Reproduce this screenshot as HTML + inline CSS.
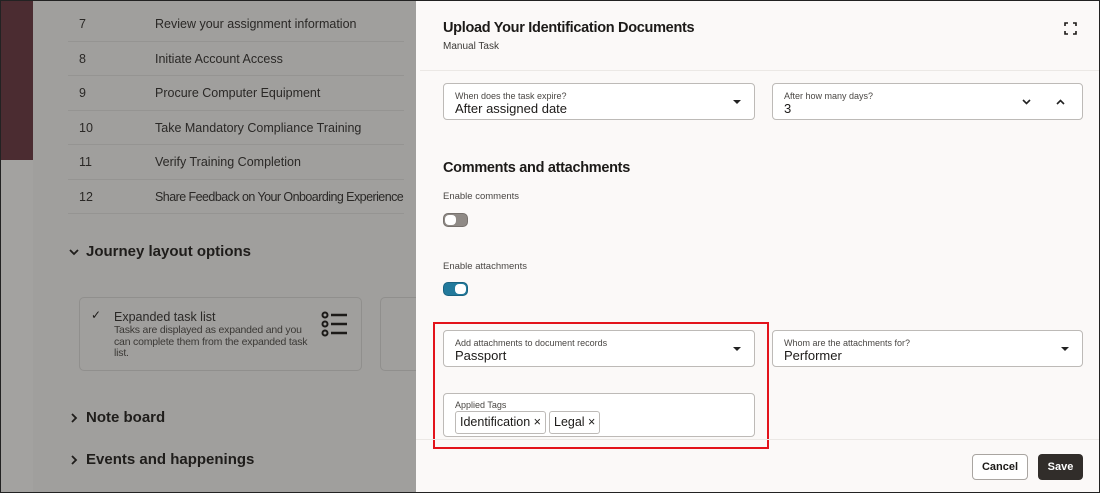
<!DOCTYPE html>
<html><head><style>
*{box-sizing:border-box;margin:0;padding:0}
body{width:1100px;height:493px;overflow:hidden;font-family:"Liberation Sans",sans-serif;background:#a09f9d;position:relative;color:#1c1a18}
.frame{position:absolute;inset:0;border:1px solid #222;z-index:10;pointer-events:none}
.maroon{position:absolute;left:0;top:0;width:33px;height:160px;background:#4b2c31}
.tex{position:absolute;left:0;top:160px;width:33px;height:333px;background:#a3a2a0}
.main{position:absolute;left:33px;top:0;width:383px;height:493px;background:#a09f9d}
.row{position:absolute;left:68px;width:336px;height:34.5px;border-bottom:1px solid #959492;font-size:12.5px;color:#2a2826;white-space:nowrap}
.row span{position:absolute;top:10px}
.sec{position:absolute;left:68px;font-size:15px;font-weight:bold;color:#1f1d1b}
.sec svg{position:absolute;left:0;top:4px}
.sec b{position:absolute;left:18px;white-space:nowrap}
.card{position:absolute;top:297px;height:74px;border:1px solid #908f8d;border-radius:5px}
.panel{position:absolute;left:416px;top:0;width:684px;height:493px;background:#fbf9f8}
.fld{position:absolute;background:#fff;border:1px solid #bdbab7;border-radius:4px;height:37px}
.fld .l{position:absolute;left:11px;top:7px;font-size:9px;color:#4a4744}
.fld .v{position:absolute;left:11px;top:17px;font-size:13px;color:#1c1a18}
.caret{position:absolute;top:16px;width:0;height:0;border-left:4px solid transparent;border-right:4px solid transparent;border-top:4px solid #222}
.lbl{position:absolute;left:27px;font-size:9.5px;color:#4a4744}
.tag{position:absolute;top:17px;height:23px;border:1px solid #bdbab7;border-radius:3px;font-size:12.5px;padding:3px 4px}
</style></head><body>
<div class="maroon"></div><div class="tex"></div>
<div class="main"></div>
<div class="row" style="top:7px"><span style="left:11px">7</span><span style="left:87px">Review your assignment information</span></div>
<div class="row" style="top:41.5px"><span style="left:11px">8</span><span style="left:87px">Initiate Account Access</span></div>
<div class="row" style="top:76px"><span style="left:11px">9</span><span style="left:87px">Procure Computer Equipment</span></div>
<div class="row" style="top:110.5px"><span style="left:11px">10</span><span style="left:87px">Take Mandatory Compliance Training</span></div>
<div class="row" style="top:145px"><span style="left:11px">11</span><span style="left:87px">Verify Training Completion</span></div>
<div class="row" style="top:179.5px"><span style="left:11px">12</span><span style="left:87px;letter-spacing:-0.55px">Share Feedback on Your Onboarding Experience</span></div>
<div class="sec" style="top:243px"><svg width="12" height="10" viewBox="0 0 12 10"><path d="M2 3L6 7L10 3" fill="none" stroke="#1f1d1b" stroke-width="1.8"/></svg><b>Journey layout options</b></div>
<div class="card" style="left:79px;width:283px">
 <div style="position:absolute;left:11px;top:10px;font-size:12px">✓</div>
 <div style="position:absolute;left:34px;top:12px;font-size:12.5px;color:#2a2826">Expanded task list</div>
 <div style="position:absolute;left:34px;top:27px;width:205px;font-size:10.5px;line-height:11.5px;color:#3b3936;letter-spacing:-0.2px">Tasks are displayed as expanded and you can complete them from the expanded task list.</div>
 <svg style="position:absolute;left:240px;top:13px" width="30" height="28" viewBox="0 0 30 28"><g fill="none" stroke="#1c1a18" stroke-width="2"><circle cx="5" cy="4" r="2.5"/><circle cx="5" cy="13" r="2.5"/><circle cx="5" cy="22" r="2.5"/><path d="M11 4H27M11 13H27M11 22H27" stroke-width="2.5"/></g></svg>
</div>
<div class="card" style="left:380px;width:60px"></div>
<div class="sec" style="top:409px"><svg width="12" height="10" viewBox="0 0 12 10"><path d="M4 1L8 5L4 9" fill="none" stroke="#1f1d1b" stroke-width="1.8"/></svg><b>Note board</b></div>
<div class="sec" style="top:451px"><svg width="12" height="10" viewBox="0 0 12 10"><path d="M4 1L8 5L4 9" fill="none" stroke="#1f1d1b" stroke-width="1.8"/></svg><b>Events and happenings</b></div>

<div class="panel">
 <div style="position:absolute;left:27px;top:20px;font-size:14.5px;font-weight:bold;letter-spacing:-0.3px">Upload Your Identification Documents</div>
 <div style="position:absolute;left:27px;top:41px;font-size:10px;color:#3b3936">Manual Task</div>
 <svg style="position:absolute;left:648px;top:22px" width="13" height="13" viewBox="0 0 13 13"><path d="M1 4V1H4M9 1H12V4M12 9V12H9M4 12H1V9" fill="none" stroke="#1c1a18" stroke-width="1.6"/></svg>
 <div style="position:absolute;left:4px;top:70px;width:680px;border-top:1px solid #ebe8e5"></div>
 <div class="fld" style="left:27px;top:83px;width:312px"><div class="l">When does the task expire?</div><div class="v">After assigned date</div><div class="caret" style="left:289px"></div></div>
 <div class="fld" style="left:356px;top:83px;width:311px"><div class="l">After how many days?</div><div class="v">3</div>
  <svg style="position:absolute;left:248px;top:13px" width="60" height="10" viewBox="0 0 60 10"><path d="M2 3L5.5 6.5L9 3M36 7L39.5 3.5L43 7" fill="none" stroke="#222" stroke-width="1.6"/></svg></div>
 <div style="position:absolute;left:27px;top:160px;font-size:14.5px;font-weight:bold;letter-spacing:-0.3px">Comments and attachments</div>
 <div class="lbl" style="top:191px">Enable comments</div>
 <div style="position:absolute;left:27px;top:213px;width:25px;height:14px;border-radius:5px;background:#8f8a86;border:1px solid #77726e"><div style="position:absolute;left:1px;top:1px;width:11px;height:10px;border-radius:4px;background:#fff"></div></div>
 <div class="lbl" style="top:261px">Enable attachments</div>
 <div style="position:absolute;left:27px;top:282px;width:25px;height:14px;border-radius:5px;background:#227a9c;border:1px solid #1a6381"><div style="position:absolute;right:1px;top:1px;width:11px;height:10px;border-radius:4px;background:#fff"></div></div>
 <div style="position:absolute;left:17px;top:322px;width:336px;height:127px;border:2px solid #e3131b"></div>
 <div class="fld" style="left:27px;top:330px;width:312px"><div class="l">Add attachments to document records</div><div class="v">Passport</div><div class="caret" style="left:289px"></div></div>
 <div class="fld" style="left:356px;top:330px;width:311px"><div class="l">Whom are the attachments for?</div><div class="v">Performer</div><div class="caret" style="left:288px"></div></div>
 <div class="fld" style="left:27px;top:393px;width:312px;height:44px"><div class="l" style="top:6px">Applied Tags</div>
  <div class="tag" style="left:11px">Identification ×</div><div class="tag" style="left:105px">Legal ×</div></div>
 <div style="position:absolute;left:0;top:439px;width:684px;border-top:1px solid #ebe8e5"></div>
 <div style="position:absolute;left:556px;top:454px;width:56px;height:26px;border:1px solid #a9a5a1;border-radius:4px;background:#fff;font-size:11px;font-weight:bold;text-align:center;line-height:24px">Cancel</div>
 <div style="position:absolute;left:622px;top:454px;width:45px;height:26px;border-radius:4px;background:#312d2a;color:#fff;font-size:11px;font-weight:bold;text-align:center;line-height:26px">Save</div>
</div>
<div class="frame"></div>
</body></html>
